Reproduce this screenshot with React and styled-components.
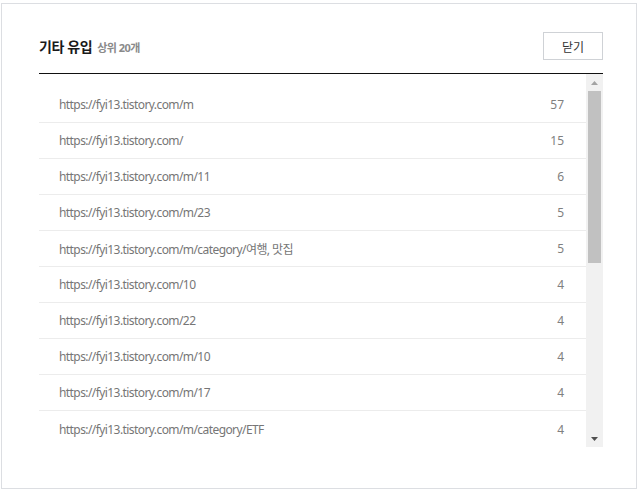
import React from "react";
import styled, { createGlobalStyle } from "styled-components";

const GlobalStyle = createGlobalStyle`
  html, body {
    margin: 0;
    padding: 0;
    background: #fff;
  }
  body {
    font-family: "Noto Sans", "Noto Sans CJK KR", sans-serif;
  }
`;

const Page = styled.div`
  width: 642px;
  height: 491px;
  padding: 3px 5px 2px 1px;
  box-sizing: border-box;
`;

const Modal = styled.div`
  height: 100%;
  box-sizing: border-box;
  border: 1px solid #dcdee2;
  background: #fff;
  padding: 28px 33px 0 37px;
`;

const Header = styled.div`
  display: flex;
  align-items: flex-start;
  justify-content: space-between;
  height: 41px;
  border-bottom: 1px solid #111;
`;

const Title = styled.h2`
  margin: 0;
  display: flex;
  align-items: baseline;
  gap: 5px;
  line-height: 29px;
  font-size: 14px;
  font-weight: 700;
  color: #1a1a1a;
  letter-spacing: -0.4px;
`;

const Sub = styled.span`
  font-size: 11px;
  font-weight: 700;
  color: #8a8a8a;
  letter-spacing: -0.5px;
`;

const CloseButton = styled.button`
  width: 60px;
  height: 28px;
  border: 1px solid #cfd2d6;
  background: #fff;
  font-family: "Noto Sans CJK KR", sans-serif;
  font-size: 12px;
  color: #333;
  cursor: pointer;
`;

const Body = styled.div`
  display: flex;
  height: 373px;
`;

const List = styled.ul`
  flex: 1;
  margin: 0;
  padding: 12px 0 0;
  list-style: none;
  overflow: hidden;
`;

const Row = styled.li`
  display: flex;
  align-items: center;
  justify-content: space-between;
  height: 36px;
  padding: 0 22px 0 20px;
  border-bottom: 1px solid #ececec;
  font-size: 12px;
  color: #767676;
  letter-spacing: -0.58px;
  box-sizing: border-box;
  &:first-child {
    height: 37px;
  }
  &:last-child {
    border-bottom: none;
  }
`;

const Count = styled.span`
  font-size: 12px;
  color: #808080;
  letter-spacing: 0;
`;

const Scrollbar = styled.div`
  width: 17px;
  display: flex;
  flex-direction: column;
  background: #f1f1f1;
`;

const Arrow = styled.div`
  height: 17px;
  display: flex;
  align-items: center;
  justify-content: center;
`;

const Track = styled.div`
  flex: 1;
  padding: 0 2px;
`;

const Thumb = styled.div`
  height: 172px;
  background: #c1c1c1;
`;

const rows = [
  ["https://fyi13.tistory.com/m", 57],
  ["https://fyi13.tistory.com/", 15],
  ["https://fyi13.tistory.com/m/11", 6],
  ["https://fyi13.tistory.com/m/23", 5],
  ["https://fyi13.tistory.com/m/category/여행, 맛집", 5],
  ["https://fyi13.tistory.com/10", 4],
  ["https://fyi13.tistory.com/22", 4],
  ["https://fyi13.tistory.com/m/10", 4],
  ["https://fyi13.tistory.com/m/17", 4],
  ["https://fyi13.tistory.com/m/category/ETF", 4],
];

const App = () => {
  return (
    <Page>
      <GlobalStyle />
      <Modal>
        <Header>
          <Title>
            기타 유입 <Sub>상위 20개</Sub>
          </Title>
          <CloseButton>닫기</CloseButton>
        </Header>
        <Body>
          <List>
            {rows.map(([url, n]) => (
              <Row key={url}>
                <span>{url}</span>
                <Count>{n}</Count>
              </Row>
            ))}
          </List>
          <Scrollbar>
            <Arrow>
              <svg width="7" height="4" viewBox="0 0 7 4">
                <path d="M0 4 L3.5 0 L7 4 Z" fill="#a3a3a3" />
              </svg>
            </Arrow>
            <Track>
              <Thumb />
            </Track>
            <Arrow>
              <svg width="7" height="4" viewBox="0 0 7 4">
                <path d="M0 0 L7 0 L3.5 4 Z" fill="#505050" />
              </svg>
            </Arrow>
          </Scrollbar>
        </Body>
      </Modal>
    </Page>
  );
};

export default App;
